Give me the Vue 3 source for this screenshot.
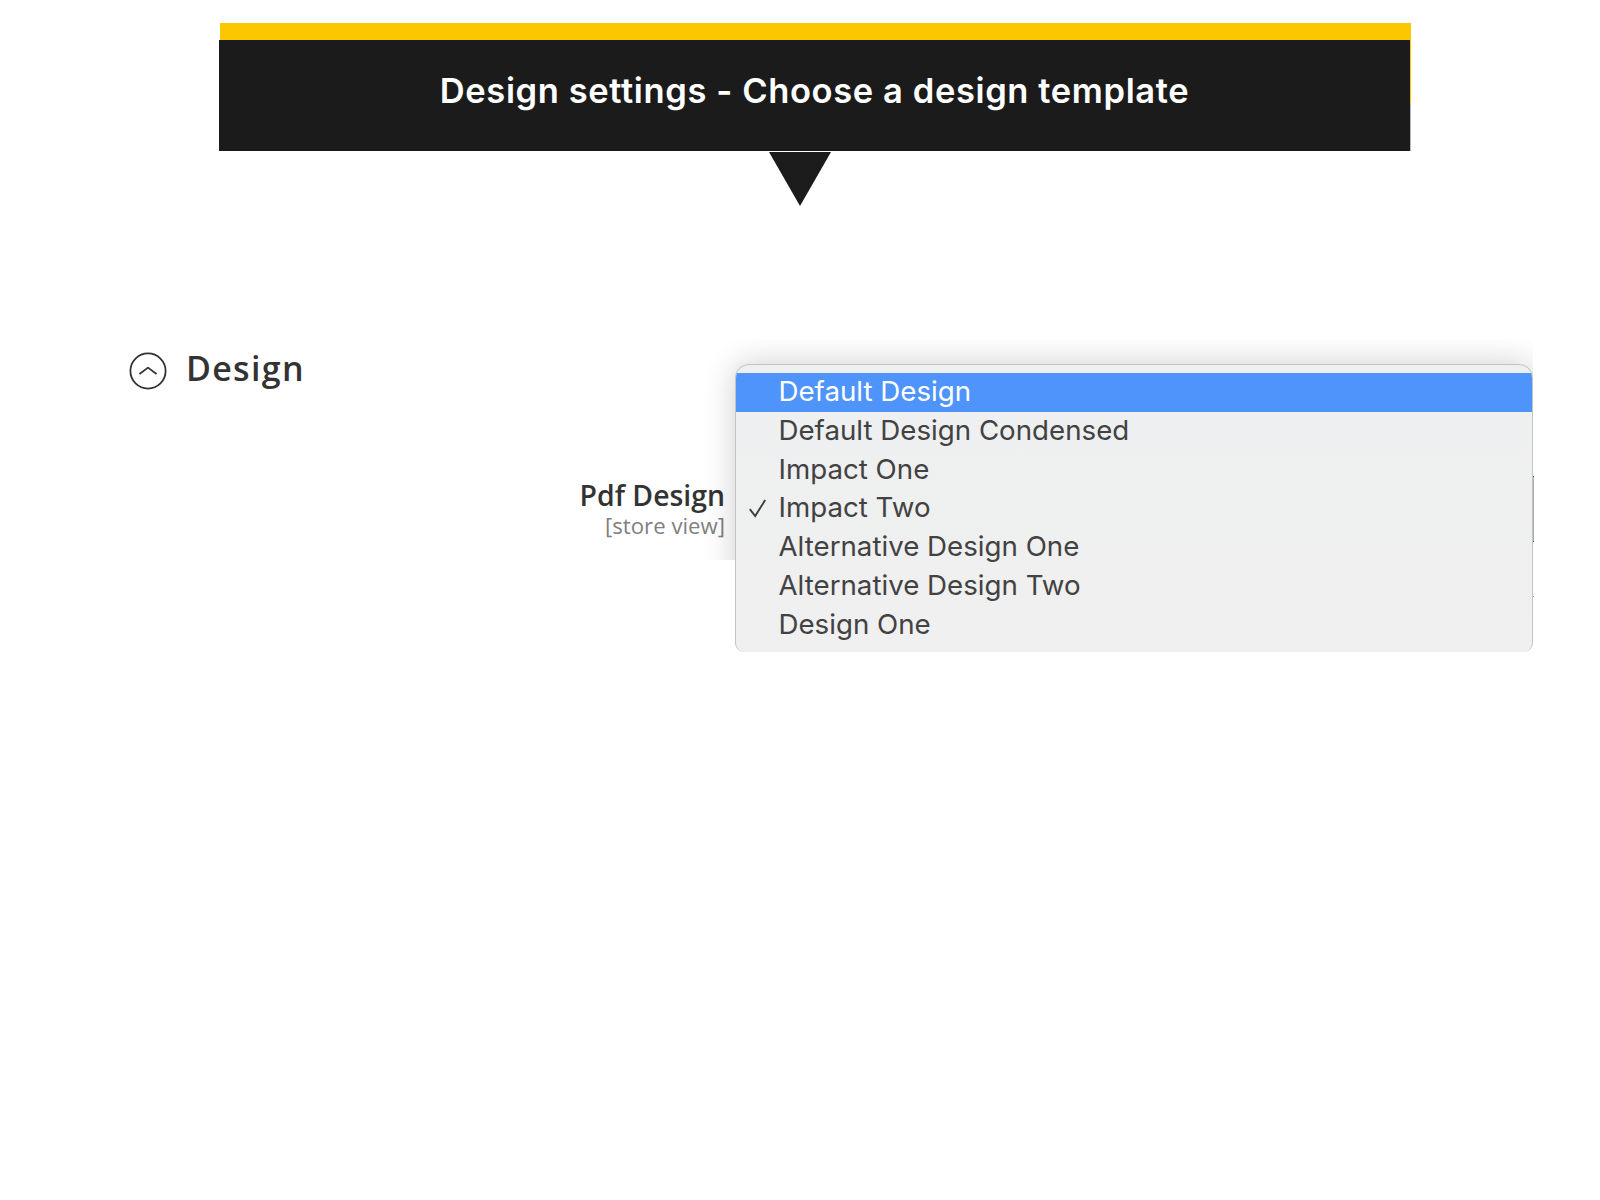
<script setup>
const options = [
  { label: 'Default Design', active: true },
  { label: 'Default Design Condensed' },
  { label: 'Impact One' },
  { label: 'Impact Two', checked: true },
  { label: 'Alternative Design One' },
  { label: 'Alternative Design Two' },
  { label: 'Design One' },
]
</script>

<template>
  <div class="page">
    <header class="banner">
      <div class="banner-yellow"></div>
      <div class="banner-dark">
        <h1 class="banner-title">Design settings - Choose a design template</h1>
      </div>
      <svg class="pointer" width="62" height="54" viewBox="0 0 62 54"><polygon points="0,0 62,0 31,54" fill="#1c1c1c" /></svg>
    </header>

    <section class="design">
      <div class="design-head">
        <svg class="toggle" width="38" height="38" viewBox="0 0 38 38" fill="none" stroke="#333" stroke-width="1.8">
          <circle cx="19" cy="19" r="17.6" />
          <path d="M10.5 22 L19 15.6 L27.5 22" stroke-linejoin="round" />
        </svg>
        <h2 class="design-title">Design</h2>
      </div>

      <div class="field">
        <div class="field-name">Pdf Design</div>
        <div class="field-scope">[store view]</div>
      </div>

      <div class="shadow-clip"><div class="shadow-box"></div></div>
      <span class="edge edge-a"></span>
      <span class="edge edge-c"></span>
      <div class="menu">
        <div v-for="o in options" :key="o.label" class="option" :class="{ active: o.active }">
          <svg v-if="o.checked" class="check" width="20" height="20" viewBox="0 0 20 20" fill="none" stroke="#3d3d3d" stroke-width="1.9"><path d="M1.8 11.2 L7.2 18 L17.2 2" /></svg>
          {{ o.label }}
        </div>
      </div>
    </section>
  </div>
</template>

<style>
body { background: #fff; }
</style>

<style scoped>
.page {
  width: 1600px;
  height: 1200px;
  position: relative;
  overflow: hidden;
  background: #fff;
  padding-top: 23px;
  box-sizing: border-box;
}
.banner {
  position: relative;
  margin-left: 219px;
  width: 1192px;
  padding-top: 17px;
  background: linear-gradient(to right, transparent calc(100% - 1px), #b9b9b9 0);
}
.banner-yellow {
  position: absolute;
  left: 1px;
  right: 0;
  top: 0;
  height: 80px;
  background: #fdc700;
}
.banner-dark {
  position: relative;
  width: 1191px;
  height: 111px;
  box-sizing: border-box;
  padding-bottom: 10px;
  background: #1b1b1b;
  display: flex;
  align-items: center;
  justify-content: center;
}
.banner-title {
  margin: 0;
  font: 600 34.5px "Inter", sans-serif;
  letter-spacing: 0.61px;
  color: #fff;
  white-space: nowrap;
}
.pointer {
  position: absolute;
  left: 550px;
  top: 129px;
}
.design {
  position: relative;
  margin-top: 189px;
  height: 400px;
}
.design-head {
  display: flex;
  align-items: center;
  gap: 19px;
  padding: 5px 0 0 129px;
}
.design-title {
  margin: 0 0 5px;
  font: 600 34px "Open Sans", sans-serif;
  color: #333;
  letter-spacing: 1.3px;
}
.field {
  position: absolute;
  left: 0;
  width: 725px;
  top: 137.5px;
  text-align: right;
}
.field-name {
  font: 600 28.4px/34px "Open Sans", sans-serif;
  color: #333;
}
.field-scope {
  font: 400 22.2px/28.5px "Open Sans", sans-serif;
  color: #808080;
}
.shadow-clip {
  position: absolute;
  left: 670px;
  top: 0;
  width: 863px;
  height: 220px;
  overflow: hidden;
}
.shadow-box {
  position: absolute;
  left: 65px;
  top: 24px;
  width: 798px;
  height: 288px;
  border-radius: 14px;
  box-shadow: 0 0 32px rgba(0, 0, 0, 0.2);
}
.edge {
  position: absolute;
  left: 1533px;
  width: 1px;
}
.edge-a { top: 136px; height: 64px; background: #a9a9a9; border-top: 1px solid #1a73d0; border-bottom: 1px solid #1a73d0; }
.edge-c { top: 256px; height: 1px; background: #999; }
.menu {
  position: absolute;
  left: 735px;
  top: 24px;
  width: 798px;
  height: 288px;
  box-sizing: border-box;
  padding-top: 8px;
  background: linear-gradient(#eeeff0, #f0f0f0);
  border: 1px solid #c4c4c4;
  border-bottom: 0;
  border-radius: 14px 14px 9px 9px;
  overflow: hidden;
}
.option {
  position: relative;
  height: 38.75px;
  padding-left: 42.5px;
  font: 400 27.7px/36.75px "Inter", sans-serif;
  color: #424242;
  white-space: nowrap;
}
.option.active {
  background: #4f94fb;
  color: #fff;
}
.check {
  position: absolute;
  left: 12px;
  top: 8.5px;
}
</style>
